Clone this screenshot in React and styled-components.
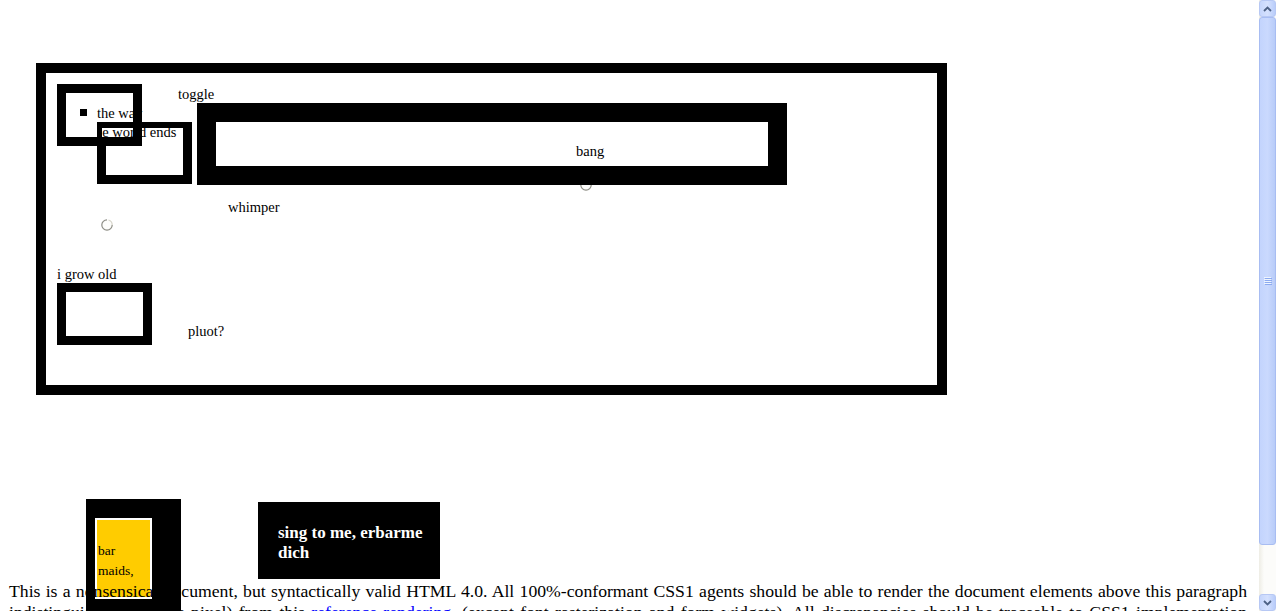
import React from "react";
import styled, { createGlobalStyle } from "styled-components";

const GlobalStyle = createGlobalStyle`
  html, body {
    margin: 0;
    padding: 0;
    background: #ffffff;
    overflow: hidden;
  }
  body {
    font-family: "Liberation Serif", "Times New Roman", serif;
    color: #000000;
  }
`;

const Window = styled.div`
  display: flex;
  width: 1276px;
  height: 611px;
`;

const Page = styled.div`
  flex: 1;
  overflow: hidden;
  background: #ffffff;
`;

const Frame = styled.div`
  box-sizing: border-box;
  margin: 63px 0 0 36px;
  width: 911px;
  height: 332px;
  padding-left: 11px;
  border: 10px solid #000;
  font-size: 14.5px;
  line-height: 17px;
`;

/* the top cluster of the frame: boxes that overlap each other on purpose */
const Canvas = styled.div`
  position: relative;
  height: 193px;
  margin-left: -11px;
`;

const Box = styled.div`
  box-sizing: border-box;
  width: ${p => p.$w}px;
  height: ${p => p.$h}px;
  border: ${p => p.$b || 9}px solid #000;
  background: ${p => (p.$clear ? "transparent" : "#fff")};
  flex-shrink: 0;
`;

const Placed = styled(Box)`
  position: absolute;
  left: ${p => p.$x}px;
  top: ${p => p.$y}px;
`;

const Label = styled.span`
  position: absolute;
  left: ${p => p.$x}px;
  top: ${p => p.$y}px;
  white-space: nowrap;
`;

const Bullet = styled.span`
  position: absolute;
  left: 34px;
  top: 36px;
  width: 7px;
  height: 7px;
  background: #000;
`;

const Clip = styled.div`
  position: absolute;
  left: 56px;
  top: 55px;
  width: 81px;
  height: 9px;
  overflow: hidden;
  background: #fff;
  span {
    display: block;
    margin: -4px 0 0 -11px;
    white-space: nowrap;
  }
`;

const RadioWrap = styled.span`
  position: absolute;
  left: ${p => p.$x}px;
  top: ${p => p.$y}px;
  width: 12px;
  height: 12px;
  line-height: 0;
`;

function Radio({ x, y }) {
  return (
    <RadioWrap $x={x} $y={y}>
      <svg width="12" height="12" viewBox="0 0 12 12">
        <circle cx="6" cy="6" r="5.5" fill="#fdfdfb" />
        <path d="M6 0.8 A5.2 5.2 0 1 0 11.2 6" fill="none" stroke="#8d8d85" strokeWidth="1.2" />
        <path d="M11.2 6 A5.2 5.2 0 0 0 7.5 1" fill="none" stroke="#d8d6cc" strokeWidth="1.2" />
      </svg>
    </RadioWrap>
  );
}

const Group = styled.div`
  display: flex;
  align-items: flex-start;
  gap: 36px;
`;

const Column = styled.div`
  display: flex;
  flex-direction: column;
`;

const Word = styled.span`
  display: block;
  white-space: nowrap;
  margin-top: ${p => p.$top || 0}px;
`;

const BottomRow = styled.div`
  display: flex;
  align-items: flex-start;
  height: 82px;
  margin-top: 104px;
  padding-left: 86px;
`;

const BarBox = styled.div`
  box-sizing: border-box;
  width: 95px;
  height: 130px;
  padding: 19px 0 0 9px;
  background: #000;
  flex-shrink: 0;
`;

const BarInner = styled.div`
  box-sizing: border-box;
  width: 57px;
  height: 81px;
  border: 2px solid #fff;
  background: #ffcc00;
  padding: 21px 0 0 1px;
  font-size: 13.5px;
  line-height: 20px;
`;

const SingBox = styled.div`
  box-sizing: border-box;
  width: 182px;
  height: 77px;
  margin: 3px 0 0 77px;
  padding: 21px 12px 0 20px;
  background: #000;
  color: #fff;
  font-weight: bold;
  font-size: 17px;
  line-height: 20px;
`;

const Para = styled.p`
  position: relative;
  z-index: 1;
  margin: 0 12px 0 9px;
  font-size: 17.7px;
  line-height: 21px;
  text-align: justify;
  a {
    color: #0000ff;
    text-decoration: none;
  }
`;

const Scrollbar = styled.div`
  display: flex;
  flex-direction: column;
  width: 17px;
  height: 611px;
  background: linear-gradient(to right, #eeede5, #fcfcfa 30%, #fcfcfa);
`;

const ScrollButton = styled.div`
  box-sizing: border-box;
  width: 17px;
  height: 17px;
  border: 1px solid #b7c8f4;
  border-radius: 3px;
  background: linear-gradient(to right, #c6d6fc, #d5e1fe 50%, #b9cdfa);
  display: flex;
  align-items: center;
  justify-content: center;
  flex-shrink: 0;
`;

const Thumb = styled.div`
  box-sizing: border-box;
  width: 17px;
  height: ${p => p.$h}px;
  border: 1px solid #a8bdf2;
  border-radius: 3px;
  background: linear-gradient(to right, #c3d4fd, #cad9fe 50%, #b8ccf8);
  display: flex;
  align-items: center;
  justify-content: center;
`;

const Track = styled.div`
  flex: 1;
`;

function Arrow({ down }) {
  return (
    <svg width="9" height="6" viewBox="0 0 9 6">
      <path
        d={down ? "M1 1 L4.5 4.5 L8 1" : "M1 5 L4.5 1.5 L8 5"}
        fill="none"
        stroke="#4d6185"
        strokeWidth="1.8"
      />
    </svg>
  );
}

function Grip() {
  return (
    <svg width="8" height="8" viewBox="0 0 8 8">
      {[0, 2, 4, 6].map(y => (
        <g key={y}>
          <rect x="0" y={y} width="7" height="1" fill="#eef4fe" />
          <rect x="1" y={y + 1} width="7" height="1" fill="#8caaf0" />
        </g>
      ))}
    </svg>
  );
}

export default function App() {
  return (
    <Window>
      <GlobalStyle />
      <Page>
        <Frame>
          <Canvas>
            <Placed $x={51} $y={49} $w={95} $h={62} />
            <Clip>
              <span>the world ends</span>
            </Clip>
            <Placed $x={11} $y={11} $w={85} $h={62} $clear />
            <Bullet />
            <Label $x={51} $y={32}>the way</Label>
            <Label $x={132} $y={13}>toggle</Label>
            <Radio x={534} y={106} />
            <Placed $x={151} $y={30} $w={590} $h={82} $b={19} />
            <Label $x={530} $y={70}>bang</Label>
            <Label $x={182} $y={126}>whimper</Label>
            <Radio x={55} y={146} />
          </Canvas>
          <Group>
            <Column>
              <Word>i grow old</Word>
              <Box $w={95} $h={62} />
            </Column>
            <Word $top={57}>pluot?</Word>
          </Group>
        </Frame>
        <BottomRow>
          <BarBox>
            <BarInner>bar maids,</BarInner>
          </BarBox>
          <SingBox>sing to me, erbarme dich</SingBox>
        </BottomRow>
        <Para>
          This is a nonsensical document, but syntactically valid HTML 4.0. All
          100%-conformant CSS1 agents should be able to render the document
          elements above this paragraph indistinguishably (to the pixel) from
          this <a href="#">reference rendering,</a> (except font rasterization
          and form widgets). All discrepancies should be traceable to CSS1
          implementation shortcomings. Please report any such shortcomings to
          the browser vendor.
        </Para>
      </Page>
      <Scrollbar>
        <ScrollButton>
          <Arrow />
        </ScrollButton>
        <Thumb $h={528}>
          <Grip />
        </Thumb>
        <Track />
        <ScrollButton>
          <Arrow down />
        </ScrollButton>
      </Scrollbar>
    </Window>
  );
}
